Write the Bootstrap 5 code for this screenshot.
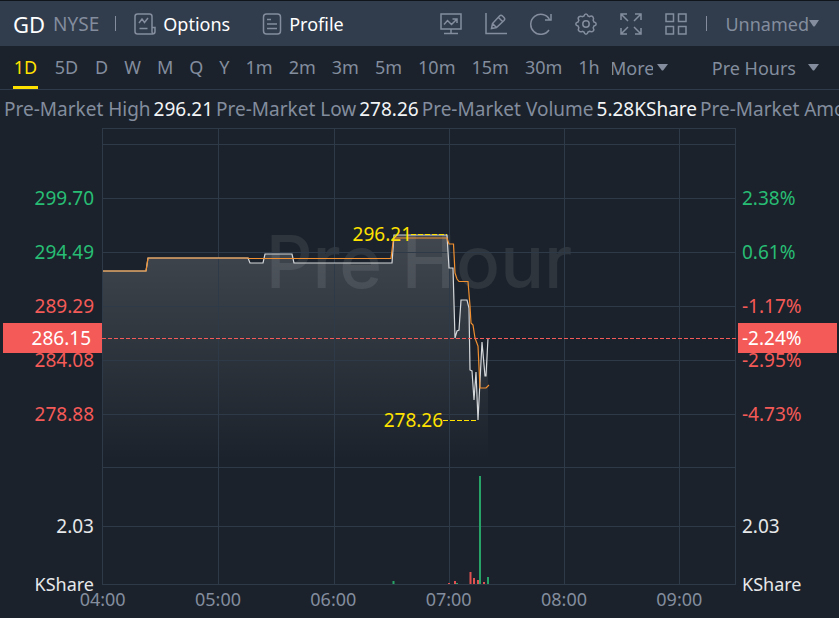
<!DOCTYPE html>
<html lang="en" data-bs-theme="dark">
<head>
<meta charset="utf-8">
<meta name="viewport" content="width=device-width, initial-scale=1">
<title>GD NYSE</title>
<link href="https://cdn.jsdelivr.net/npm/bootstrap@5.3.0/dist/css/bootstrap.min.css" rel="stylesheet">
<style>
  :root { --bg:#1b222b; --bar:#313c4c; --muted:#838d9e; --grid:#2f3a48; --up:#28bd74; --down:#f45a58; --hot:#ffe100; }
  body { background:var(--bg); color:var(--muted); font-family:"Noto Sans","Open Sans",sans-serif; font-size:18px; line-height:24px; overflow-x:hidden; }
  button { background:none; border:0; padding:0; color:inherit; white-space:nowrap; }
  .quote-bar { background:var(--bar); border-top:1px solid #10151b; height:46px; padding:0 20px 0 13px; }
  .symbol { font-size:22px; color:#fff; }
  .exchange { font-size:19px; margin-left:8px; }
  .divider { width:1px; height:15px; background:var(--muted); }
  .quote-bar svg { display:block; fill:none; stroke:var(--muted); stroke-width:1.5; }
  .links { gap:32px; margin-left:18px; }
  .link-btn { color:#fff; gap:7px; }
  .tools { gap:23px; margin-right:19px; }
  .account { margin-left:18px; }
  svg.caret-down { display:block; fill:var(--muted); stroke:none !important; }
  .period-bar { height:44px; border-bottom:1px solid #2f3b4a; padding:0 20px 0 13px; }
  .periods { gap:16px; }
  .periods button { height:43px; padding-top:2px; border-bottom:3px solid transparent; }
  .periods button.day { width:25px; }
  .periods button.active { color:var(--hot); border-color:var(--hot); }
  .more-text { width:41px; overflow:hidden; }
  .stats { font-size:19px; height:38px; padding-left:4px; gap:3px; white-space:nowrap; overflow:hidden; }
  .stats b { color:#f2f4f6; font-weight:400; }
  .chart { display:grid; grid-template-columns:102px 1fr 103px; font-size:19px; }
  .axis { padding-top:43px; line-height:54px; }
  .axis-left { text-align:right; padding-right:8px; }
  .axis-right { padding-left:6px; }
  .axis .vol { line-height:58px; margin-top:56px; color:#e6e8ea; }
  .axis .unit { font-size:18px; line-height:58px; margin-bottom:-27px; color:#e6e8ea; }
  .up { color:var(--up); } .down { color:var(--down); }
  .tag { position:absolute; top:195px; height:30px; line-height:30px; background:var(--down); color:#fff; }
  .axis-left .tag { left:3px; right:0; padding-right:11px; }
  .axis-right .tag { left:2px; right:2px; padding-left:4px; }
  .plot svg { display:block; width:100%; height:458px; position:relative; overflow:visible; }
  .plot path { fill:none; vector-effect:non-scaling-stroke; }
  .watermark { position:absolute; top:84px; left:0; right:0; text-align:center; font-family:Inter,"Noto Sans",sans-serif; font-size:73px; line-height:100px; font-weight:500; color:rgba(255,255,255,.085); }
  .peak, .trough { position:absolute; color:var(--hot); line-height:24px; }
  .peak { top:94px; right:51.1%; } .trough { top:280px; right:46.2%; }
  .times { display:grid; grid-template-columns:repeat(6,1fr); padding:0 102px 0 45px; text-align:center; line-height:26px; }
</style>
</head>
<body>
<header class="quote-bar d-flex align-items-center">
  <span class="symbol">GD</span><span class="exchange">NYSE</span>
  <span class="divider ms-3"></span>
  <div class="links d-flex align-items-center">
    <button type="button" class="link-btn d-flex align-items-center">
      <svg width="22" height="22" viewBox="0 0 22 22"><path d="M18 14V3.500Q18 1 15.500 1H3.500Q1 1 1 3.500V18.500Q1 21 3.500 21H18.500Q21 21 21 18.500V14.500H18V18.500Q18 21 20 20.500M5 10L8 6L10.500 9.500L14 5M5.500 15.500H13.500"/></svg>
      Options
    </button>
    <button type="button" class="link-btn d-flex align-items-center">
      <svg width="20" height="22" viewBox="0 0 20 22"><rect x="1.500" y="1" width="17" height="20" rx="3"/><path d="M5 6.500H9M5 11H15M5 15.500H15"/></svg>
      Profile
    </button>
  </div>
  <div class="tools d-flex align-items-center ms-auto">
    <button type="button" aria-label="Monitor"><svg width="22" height="22" viewBox="0 0 22 22"><path d="M1 1H21V16H1ZM11 16V20M4 20.500H18M4 11.500L7.500 7.500L11.500 11.500L17 6M12.500 6H17V10"/></svg></button>
    <button type="button" aria-label="Draw"><svg width="22" height="22" viewBox="0 0 22 22"><path d="M1 0V20.500H22M6.500 15.500L7.500 10.500L14.500 3Q16 1.500 17.500 3L19 4.500Q20.500 6 19 7.500L11.500 14.500ZM13.500 4.500L17.500 8.500M7.500 10.500L11.500 14.500"/></svg></button>
    <button type="button" aria-label="Refresh"><svg width="22" height="22" viewBox="0 0 22 22"><path d="M19 17A10 10 0 1 1 19.500 6.500M21 1V7H15"/></svg></button>
    <button type="button" aria-label="Settings"><svg width="22" height="22" viewBox="0 0 22 22"><circle cx="11" cy="11" r="3.200"/><path d="M9 3Q9.500 1 11 1T13 3L14.500 3.700Q16.500 2.300 17.800 3.700T18.200 7.200L19 9Q21.200 9.500 21.200 11T19 13L18.200 14.800Q19.500 16.700 18.200 18T14.500 18.300L13 19Q12.500 21.200 11 21.200T9 19L7.500 18.300Q5.300 19.500 4 18.100T3.800 14.800L3 13Q.8 12.500 .8 11T3 9L3.800 7.200Q2.500 5.200 3.900 3.900T7.500 3.700Z"/></svg></button>
    <button type="button" aria-label="Full screen"><svg width="22" height="22" viewBox="0 0 22 22"><path d="M1 7V1H7M1 1L8 8M15 1H21V7M21 1L14 8M1 15V21H7M1 21L8 14M15 21H21V15M21 21L14 14"/></svg></button>
    <button type="button" aria-label="Layout grid"><svg width="22" height="22" viewBox="0 0 22 22"><path d="M1 1H8.500V8.500H1ZM13.500 1H21V8.500H13.500ZM1 13.500H8.500V21H1ZM13.500 13.500H21V21H13.500Z"/></svg></button>
  </div>
  <span class="divider"></span>
  <button type="button" class="account d-flex align-items-center">Unnamed<svg class="caret-down" width="10" height="7" viewBox="0 0 10 7"><path d="M0 0H10L6 6Q5 7 4 6Z"/></svg></button>
</header>

<nav class="period-bar d-flex align-items-center" aria-label="Periods">
  <div class="periods d-flex">
    <button type="button" class="day active">1D</button><button type="button" class="day">5D</button><button type="button">D</button><button type="button">W</button><button type="button">M</button><button type="button">Q</button><button type="button">Y</button><button type="button">1m</button><button type="button">2m</button><button type="button">3m</button><button type="button">5m</button><button type="button">10m</button><button type="button">15m</button><button type="button">30m</button><button type="button">1h</button>
  </div>
  <button type="button" class="d-flex align-items-center ms-2 ps-1"><span class="more-text d-flex justify-content-center">More</span><svg class="caret-down ms-1" width="11" height="7" viewBox="0 0 11 7"><path d="M0 0H11L6.500 6Q5.500 7 4.500 6Z"/></svg></button>
  <button type="button" class="d-flex align-items-center ms-auto">Pre Hours<svg class="caret-down ms-2" width="15" height="7" viewBox="-4 0 15 7"><path d="M0 0H11L6.500 6Q5.500 7 4.500 6Z"/></svg></button>
</nav>

<main>
  <div class="stats d-flex align-items-center">
    <span>Pre-Market High</span><b>296.21</b><span>Pre-Market Low</span><b>278.26</b><span>Pre-Market Volume</span><b>5.28KShare</b><span>Pre-Market Amount</span>
  </div>

  <div class="chart">
    <div class="axis axis-left position-relative">
      <div class="up">299.70</div><div class="up">294.49</div><div class="down">289.29</div><div class="down">284.08</div><div class="down">278.88</div>
      <div class="vol">2.03</div><div class="unit">KShare</div>
      <div class="tag">286.15</div>
    </div>

    <div class="plot position-relative">
      <div class="watermark">Pre Hour</div>
      <svg viewBox="102 128 634 458" preserveAspectRatio="none" role="img" aria-label="Pre-market price and volume">
        <defs><linearGradient id="fade" x1="0" y1="235" x2="0" y2="460" gradientUnits="userSpaceOnUse"><stop offset="0" stop-color="#fff" stop-opacity=".17"/><stop offset="1" stop-color="#fff" stop-opacity="0"/></linearGradient></defs>
        <path style="fill:url(#fade)" d="M103 467V271H146L148 258H248L250 263H263L265 254H292L294 263H392L394 235H447L449 268H453L455 338L457 331L459 330L461 300H467L469 308L470 370L472 371L474 400L476 372L478 420L482 342L485 376H486L488 338V467Z"/>
        <path stroke="#2f3a48" shape-rendering="crispEdges" d="M102 128.500H736M102 144.500H736M102 198.500H736M102 252.500H736M102 306.500H736M102 360.500H736M102 414.500H736M102 467.500H736M102 526.500H736M102 584.500H736M102.500 128V585M218.500 128V585M334.500 128V585M449.500 128V585M564.500 128V585M679.500 128V585M735.500 128V585"/>
        <path stroke="#d4d7da" stroke-width="1.2" d="M103 271H146L148 258H248L250 263H263L265 254H292L294 263H392L394 235H447L449 268H453L455 338L457 331L459 330L461 300H467L469 308L470 370L472 371L474 400L476 372L478 420L482 342L485 376H486L488 338"/>
        <path stroke="#f09030" stroke-width="1.2" d="M103 271H146L148 258H248L249 258.500H391L393.500 238H447L449 244H453.500L455 273L457 279L459 281.500H468L470 306L471 323L473 325L475 338L478 346L480 388H486L489 385"/>
        <path stroke="#f45a58" stroke-dasharray="4 2" d="M102 338.500H738"/>
        <path stroke="#ffe100" stroke-dasharray="5 2" d="M411 234.500H447M443 420.500H478"/>
        <path stroke="#28a368" stroke-width="2" d="M480 476V584M488 577V584M393.500 581V584M457 583V584"/>
        <path stroke="#e05252" stroke-width="2" d="M470.500 572V584M474 578V584M478 580V584M484 582V584M455 581V584M449 583V584"/>
      </svg>
      <span class="peak">296.21</span><span class="trough">278.26</span>
    </div>

    <div class="axis axis-right position-relative">
      <div class="up">2.38%</div><div class="up">0.61%</div><div class="down">-1.17%</div><div class="down">-2.95%</div><div class="down">-4.73%</div>
      <div class="vol">2.03</div><div class="unit">KShare</div>
      <div class="tag">-2.24%</div>
    </div>
  </div>
  <div class="times"><span>04:00</span><span>05:00</span><span>06:00</span><span>07:00</span><span>08:00</span><span>09:00</span></div>
</main>
<script src="https://cdn.jsdelivr.net/npm/bootstrap@5.3.0/dist/js/bootstrap.bundle.min.js"></script>
</body>
</html>
